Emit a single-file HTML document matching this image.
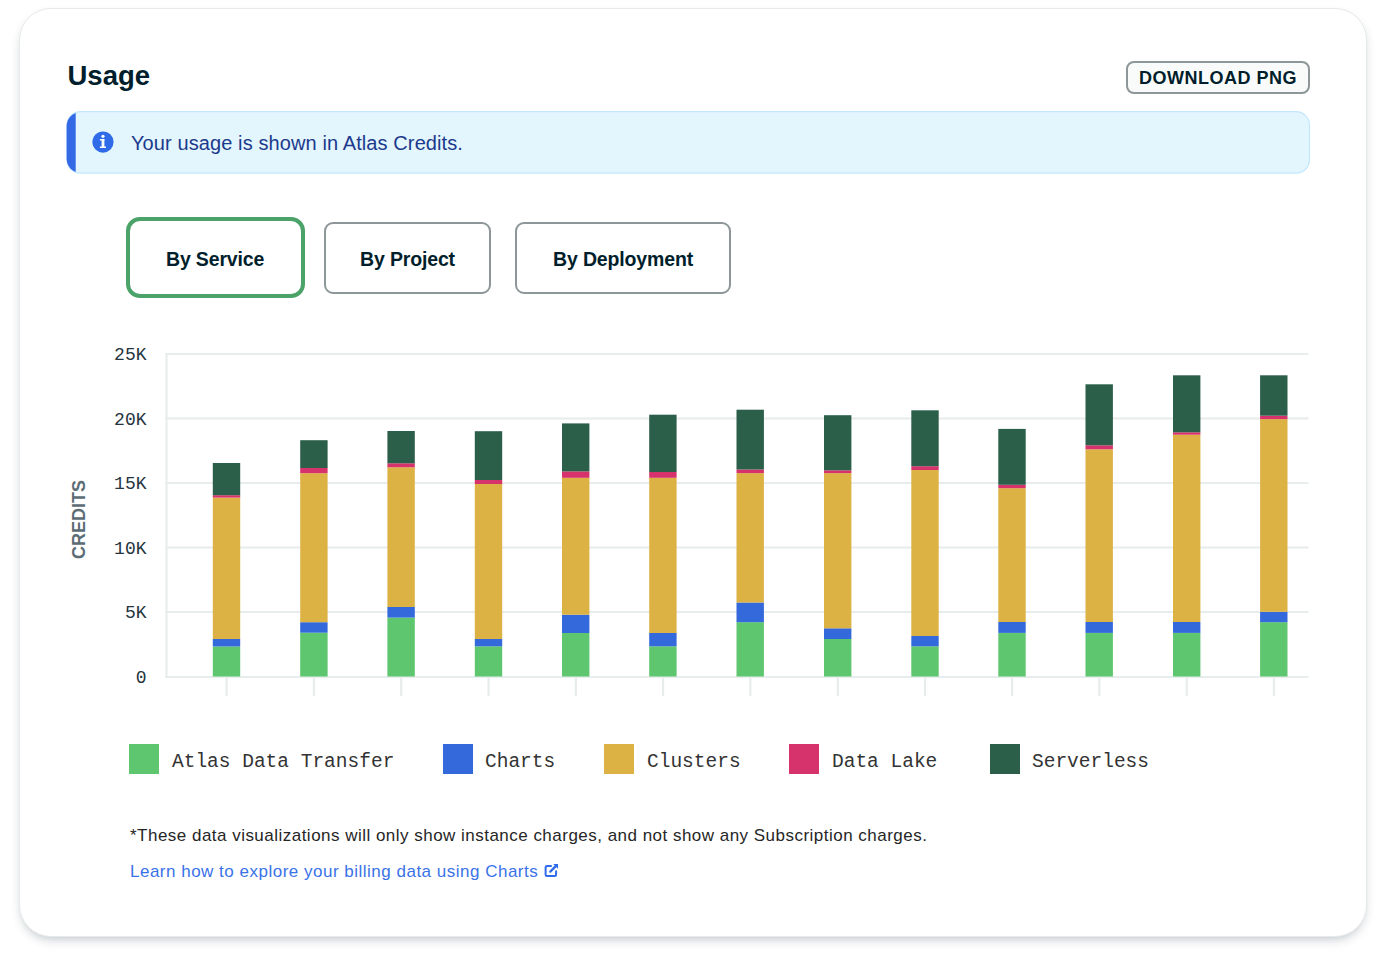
<!DOCTYPE html>
<html>
<head>
<meta charset="utf-8">
<style>
html,body{margin:0;padding:0;background:#fff;width:1380px;height:958px;overflow:hidden;}
body{position:relative;font-family:"Liberation Sans",sans-serif;}
.card{position:absolute;left:18.5px;top:7.5px;width:1346px;height:927px;border:1.6px solid #e6eaeb;border-radius:32px;background:#fff;box-shadow:0 5px 12px -4px rgba(0,30,43,0.3);}
.abs{position:absolute;white-space:nowrap;}
.title{left:67.5px;top:59px;font-size:27.5px;font-weight:bold;color:#001e2b;line-height:34px;}
.dl{left:1126px;top:61px;width:180px;height:29px;border:2px solid #8d9699;border-radius:8px;background:#f9fbfa;box-sizing:content-box;}
.dl span{position:absolute;left:11px;top:5px;font-size:18px;font-weight:bold;letter-spacing:0.5px;color:#001e2b;line-height:20px;}
.banner{left:66px;top:111px;width:1244px;height:62px;box-sizing:border-box;border:1px solid #c3e7fe;border-left:9px solid #3469e6;border-radius:14px;background:#e3f5fd;}
.btxt{left:131px;top:131px;font-size:20px;color:#1b3a8c;line-height:24px;letter-spacing:0.1px;}
.tab{position:absolute;box-sizing:border-box;border:2px solid #8d9699;border-radius:9px;background:#fff;}
.tab span{position:absolute;left:0;right:0;text-align:center;font-size:19.5px;letter-spacing:-0.15px;font-weight:bold;color:#001e2b;line-height:22px;}
.legend-sq{position:absolute;width:30px;height:30px;top:744px;}
.legend-t{position:absolute;top:749.5px;font-family:"Liberation Mono",monospace;font-size:19.5px;color:#333333;line-height:24px;white-space:nowrap;}
.foot{left:130px;top:824.5px;font-size:17px;color:#262626;line-height:22px;letter-spacing:0.48px;}
.link{left:130px;top:860.5px;font-size:17px;color:#3a72e8;line-height:22px;letter-spacing:0.5px;}
</style>
</head>
<body>
<div class="card"></div>
<div class="abs title">Usage</div>
<div class="abs dl"><span>DOWNLOAD PNG</span></div>
<svg class="abs" style="left:0;top:0" width="1380" height="200">
  <defs><clipPath id="bclip"><rect x="66.6" y="112.4" width="1242" height="60.2" rx="13" ry="14"/></clipPath></defs>
  <rect x="67.1" y="111.6" width="1242.4" height="61.6" rx="13.5" ry="13.5" fill="#e3f5fd" stroke="#c3e7fe" stroke-width="1.2"/>
  <rect x="66" y="111" width="9.7" height="63" fill="#3469e6" clip-path="url(#bclip)"/>
</svg>
<svg class="abs" style="left:92px;top:131px" width="22" height="22" viewBox="0 0 22 22">
  <circle cx="11" cy="11.1" r="10.6" fill="#2f6ae8"/>
  <rect x="9.6" y="8.1" width="2.8" height="8.9" fill="#fff"/>
  <rect x="7.9" y="8.1" width="4.5" height="1.4" fill="#fff"/>
  <rect x="7.9" y="15.5" width="6.1" height="1.5" fill="#fff"/>
  <circle cx="11" cy="5.3" r="1.6" fill="#fff"/>
</svg>
<div class="abs btxt">Your usage is shown in Atlas Credits.</div>

<div class="tab" style="left:125.6px;top:217.3px;width:179px;height:81.2px;border:4.5px solid #4ba36a;border-radius:14px;"><span style="top:27px">By Service</span></div>
<div class="tab" style="left:324px;top:222px;width:167px;height:72px;"><span style="top:24px">By Project</span></div>
<div class="tab" style="left:515px;top:222px;width:216px;height:72px;"><span style="top:24px">By Deployment</span></div>

<svg class="abs" style="left:0;top:0" width="1380" height="958" id="chart">
<rect x="165.5" y="353.0" width="1143" height="2" fill="#e7ecec"/>
<rect x="165.5" y="417.5" width="1143" height="2" fill="#e7ecec"/>
<rect x="165.5" y="482.0" width="1143" height="2" fill="#e7ecec"/>
<rect x="165.5" y="546.5" width="1143" height="2" fill="#e7ecec"/>
<rect x="165.5" y="611.0" width="1143" height="2" fill="#e7ecec"/>
<rect x="165.5" y="676.0" width="1143" height="2" fill="#e7ecec"/>
<rect x="165.5" y="353" width="2" height="325" fill="#e7ecec"/>
<rect x="225.5" y="678" width="2.2" height="18" fill="#e7ecec"/>
<rect x="312.9" y="678" width="2.2" height="18" fill="#e7ecec"/>
<rect x="400.1" y="678" width="2.2" height="18" fill="#e7ecec"/>
<rect x="487.5" y="678" width="2.2" height="18" fill="#e7ecec"/>
<rect x="574.7" y="678" width="2.2" height="18" fill="#e7ecec"/>
<rect x="661.9" y="678" width="2.2" height="18" fill="#e7ecec"/>
<rect x="749.2" y="678" width="2.2" height="18" fill="#e7ecec"/>
<rect x="836.7" y="678" width="2.2" height="18" fill="#e7ecec"/>
<rect x="924.0" y="678" width="2.2" height="18" fill="#e7ecec"/>
<rect x="1011.0" y="678" width="2.2" height="18" fill="#e7ecec"/>
<rect x="1098.2" y="678" width="2.2" height="18" fill="#e7ecec"/>
<rect x="1185.7" y="678" width="2.2" height="18" fill="#e7ecec"/>
<rect x="1272.8" y="678" width="2.2" height="18" fill="#e7ecec"/>
<rect x="212.8" y="646.5" width="27.4" height="30.0" fill="#5ec66e"/>
<rect x="212.8" y="639.0" width="27.4" height="7.5" fill="#3469dc"/>
<rect x="212.8" y="497.6" width="27.4" height="141.4" fill="#dcb244"/>
<rect x="212.8" y="495.2" width="27.4" height="2.4" fill="#d6336c"/>
<rect x="212.8" y="463.0" width="27.4" height="32.2" fill="#2c5f4a"/>
<rect x="300.2" y="632.7" width="27.4" height="43.8" fill="#5ec66e"/>
<rect x="300.2" y="622.2" width="27.4" height="10.5" fill="#3469dc"/>
<rect x="300.2" y="473.2" width="27.4" height="149.0" fill="#dcb244"/>
<rect x="300.2" y="468.0" width="27.4" height="5.2" fill="#d6336c"/>
<rect x="300.2" y="440.2" width="27.4" height="27.8" fill="#2c5f4a"/>
<rect x="387.4" y="617.6" width="27.4" height="58.9" fill="#5ec66e"/>
<rect x="387.4" y="607.0" width="27.4" height="10.6" fill="#3469dc"/>
<rect x="387.4" y="467.3" width="27.4" height="139.7" fill="#dcb244"/>
<rect x="387.4" y="463.3" width="27.4" height="4.0" fill="#d6336c"/>
<rect x="387.4" y="431.0" width="27.4" height="32.3" fill="#2c5f4a"/>
<rect x="474.8" y="646.3" width="27.4" height="30.2" fill="#5ec66e"/>
<rect x="474.8" y="639.0" width="27.4" height="7.3" fill="#3469dc"/>
<rect x="474.8" y="484.0" width="27.4" height="155.0" fill="#dcb244"/>
<rect x="474.8" y="480.0" width="27.4" height="4.0" fill="#d6336c"/>
<rect x="474.8" y="431.2" width="27.4" height="48.8" fill="#2c5f4a"/>
<rect x="562.0" y="633.0" width="27.4" height="43.5" fill="#5ec66e"/>
<rect x="562.0" y="614.7" width="27.4" height="18.3" fill="#3469dc"/>
<rect x="562.0" y="477.8" width="27.4" height="136.9" fill="#dcb244"/>
<rect x="562.0" y="471.4" width="27.4" height="6.4" fill="#d6336c"/>
<rect x="562.0" y="423.4" width="27.4" height="48.0" fill="#2c5f4a"/>
<rect x="649.2" y="646.3" width="27.4" height="30.2" fill="#5ec66e"/>
<rect x="649.2" y="633.0" width="27.4" height="13.3" fill="#3469dc"/>
<rect x="649.2" y="477.8" width="27.4" height="155.2" fill="#dcb244"/>
<rect x="649.2" y="472.0" width="27.4" height="5.8" fill="#d6336c"/>
<rect x="649.2" y="414.7" width="27.4" height="57.3" fill="#2c5f4a"/>
<rect x="736.5" y="622.2" width="27.4" height="54.3" fill="#5ec66e"/>
<rect x="736.5" y="602.5" width="27.4" height="19.7" fill="#3469dc"/>
<rect x="736.5" y="473.1" width="27.4" height="129.4" fill="#dcb244"/>
<rect x="736.5" y="469.5" width="27.4" height="3.6" fill="#d6336c"/>
<rect x="736.5" y="409.7" width="27.4" height="59.8" fill="#2c5f4a"/>
<rect x="824.0" y="639.0" width="27.4" height="37.5" fill="#5ec66e"/>
<rect x="824.0" y="628.3" width="27.4" height="10.7" fill="#3469dc"/>
<rect x="824.0" y="473.1" width="27.4" height="155.2" fill="#dcb244"/>
<rect x="824.0" y="470.3" width="27.4" height="2.8" fill="#d6336c"/>
<rect x="824.0" y="415.2" width="27.4" height="55.1" fill="#2c5f4a"/>
<rect x="911.3" y="646.3" width="27.4" height="30.2" fill="#5ec66e"/>
<rect x="911.3" y="636.0" width="27.4" height="10.3" fill="#3469dc"/>
<rect x="911.3" y="470.0" width="27.4" height="166.0" fill="#dcb244"/>
<rect x="911.3" y="466.2" width="27.4" height="3.8" fill="#d6336c"/>
<rect x="911.3" y="410.3" width="27.4" height="55.9" fill="#2c5f4a"/>
<rect x="998.3" y="632.9" width="27.4" height="43.6" fill="#5ec66e"/>
<rect x="998.3" y="622.0" width="27.4" height="10.9" fill="#3469dc"/>
<rect x="998.3" y="488.2" width="27.4" height="133.8" fill="#dcb244"/>
<rect x="998.3" y="484.8" width="27.4" height="3.4" fill="#d6336c"/>
<rect x="998.3" y="428.9" width="27.4" height="55.9" fill="#2c5f4a"/>
<rect x="1085.5" y="632.9" width="27.4" height="43.6" fill="#5ec66e"/>
<rect x="1085.5" y="622.0" width="27.4" height="10.9" fill="#3469dc"/>
<rect x="1085.5" y="449.3" width="27.4" height="172.7" fill="#dcb244"/>
<rect x="1085.5" y="445.3" width="27.4" height="4.0" fill="#d6336c"/>
<rect x="1085.5" y="384.3" width="27.4" height="61.0" fill="#2c5f4a"/>
<rect x="1173.0" y="632.9" width="27.4" height="43.6" fill="#5ec66e"/>
<rect x="1173.0" y="622.0" width="27.4" height="10.9" fill="#3469dc"/>
<rect x="1173.0" y="434.7" width="27.4" height="187.3" fill="#dcb244"/>
<rect x="1173.0" y="432.3" width="27.4" height="2.4" fill="#d6336c"/>
<rect x="1173.0" y="375.3" width="27.4" height="57.0" fill="#2c5f4a"/>
<rect x="1260.1" y="622.2" width="27.4" height="54.3" fill="#5ec66e"/>
<rect x="1260.1" y="611.8" width="27.4" height="10.4" fill="#3469dc"/>
<rect x="1260.1" y="419.1" width="27.4" height="192.7" fill="#dcb244"/>
<rect x="1260.1" y="415.7" width="27.4" height="3.4" fill="#d6336c"/>
<rect x="1260.1" y="375.3" width="27.4" height="40.4" fill="#2c5f4a"/>
<text x="146.5" y="360.3" text-anchor="end" font-family="Liberation Mono" font-size="18" fill="#25343d">25K</text>
<text x="146.5" y="424.8" text-anchor="end" font-family="Liberation Mono" font-size="18" fill="#25343d">20K</text>
<text x="146.5" y="489.3" text-anchor="end" font-family="Liberation Mono" font-size="18" fill="#25343d">15K</text>
<text x="146.5" y="553.8" text-anchor="end" font-family="Liberation Mono" font-size="18" fill="#25343d">10K</text>
<text x="146.5" y="618.3" text-anchor="end" font-family="Liberation Mono" font-size="18" fill="#25343d">5K</text>
<text x="146.5" y="682.8" text-anchor="end" font-family="Liberation Mono" font-size="18" fill="#25343d">0</text>
<text transform="translate(85,519.5) rotate(-90)" text-anchor="middle" font-family="Liberation Sans" font-weight="bold" font-size="18" letter-spacing="0" fill="#5c6c75">CREDITS</text>
</svg>

<div class="legend-sq" style="left:129px;background:#5ec66e"></div>
<div class="legend-t" style="left:172px">Atlas Data Transfer</div>
<div class="legend-sq" style="left:443px;background:#3469dc"></div>
<div class="legend-t" style="left:485px">Charts</div>
<div class="legend-sq" style="left:604px;background:#dcb244"></div>
<div class="legend-t" style="left:647px">Clusters</div>
<div class="legend-sq" style="left:789px;background:#d6336c"></div>
<div class="legend-t" style="left:832px">Data Lake</div>
<div class="legend-sq" style="left:990px;background:#2c5f4a"></div>
<div class="legend-t" style="left:1032px">Serverless</div>

<div class="abs foot">*These data visualizations will only show instance charges, and not show any Subscription charges.</div>
<div class="abs link">Learn how to explore your billing data using Charts</div>
<svg class="abs" style="left:544px;top:863px" width="16" height="16" viewBox="0 0 16 16">
  <path d="M7 3 H3 Q1.6 3 1.6 4.4 V11.7 Q1.6 13.1 3 13.1 H10.7 Q12.1 13.1 12.1 11.7 V8.3" fill="none" stroke="#2f6bea" stroke-width="2" stroke-linecap="round"/>
  <path d="M6.3 8.6 L12 2.9" stroke="#2f6bea" stroke-width="2.3" stroke-linecap="round"/>
  <path d="M9.2 0.9 H14 V5.7 Z" fill="#2f6bea"/>
</svg>
</body>
</html>
